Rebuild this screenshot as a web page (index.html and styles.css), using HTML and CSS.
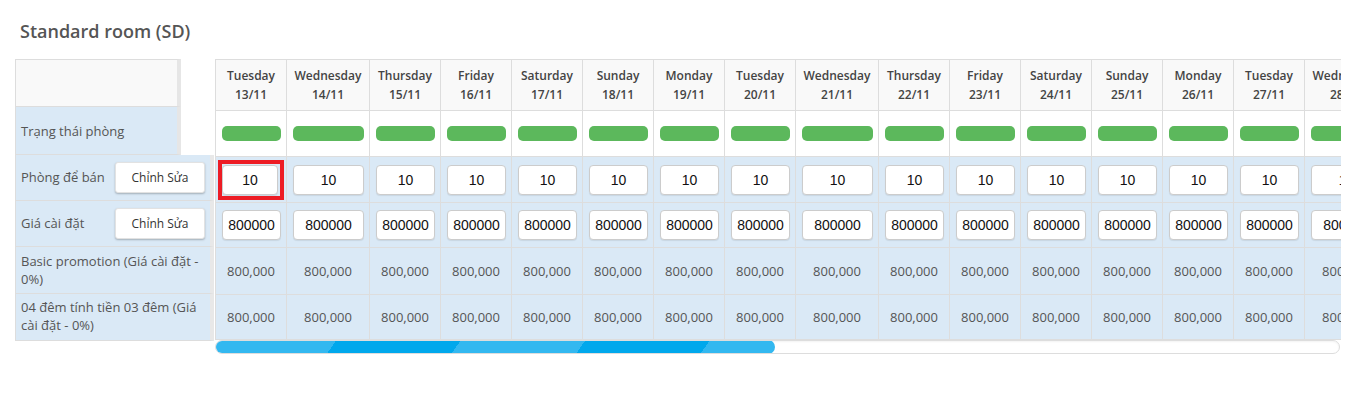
FILE: index.html
```html
<!DOCTYPE html>
<html lang="vi">
<head>
    <meta charset="UTF-8">
    <meta name="viewport" content="width=device-width, initial-scale=1.0">
    <title>Standard room (SD)</title>
    <link rel="stylesheet" href="styles.css">
</head>
<body>
    <div class="page">
        <h2 class="room-title">Standard room (SD)</h2>
        <div class="board">
            <div class="side">
                <div class="side-row narrow head"></div>
                <div class="side-row narrow status">Trạng thái phòng</div>
                <div class="side-row wide row-sell">
                    <span class="side-label">Phòng để bán</span>
                    <button class="btn-edit">Chỉnh Sửa</button>
                </div>
                <div class="side-row wide row-price">
                    <span class="side-label">Giá cài đặt</span>
                    <button class="btn-edit">Chỉnh Sửa</button>
                </div>
                <div class="side-row wide row-promo">Basic promotion (Giá cài đặt - 0%)</div>
                <div class="side-row wide row-promo">04 đêm tính tiền 03 đêm (Giá cài đặt - 0%)</div>
            </div>

            <div class="calendar">
                <div class="calendar-view">
                    <table class="grid">
                        <thead>
                            <tr id="dayRow"></tr>
                        </thead>
                        <tbody>
                            <tr class="status-row" id="statusRow"></tr>
                            <tr class="blue-row input-row" id="sellRow"></tr>
                            <tr class="blue-row input-row price-row" id="priceRow"></tr>
                            <tr class="blue-row value-row" id="promoRow"></tr>
                            <tr class="blue-row value-row last-row" id="nightRow"></tr>
                        </tbody>
                    </table>
                </div>
                <div class="scrollbar">
                    <div class="scroll-thumb"></div>
                </div>
            </div>
        </div>
    </div>

    <script>
        const days = [
            ['Tuesday', '13/11'], ['Wednesday', '14/11'], ['Thursday', '15/11'], ['Friday', '16/11'],
            ['Saturday', '17/11'], ['Sunday', '18/11'], ['Monday', '19/11'], ['Tuesday', '20/11'],
            ['Wednesday', '21/11'], ['Thursday', '22/11'], ['Friday', '23/11'], ['Saturday', '24/11'],
            ['Sunday', '25/11'], ['Monday', '26/11'], ['Tuesday', '27/11'], ['Wednesday', '28/11']
        ];

        let dayHTML = '';
        let statusHTML = '';
        let sellHTML = '';
        let priceHTML = '';
        let promoHTML = '';
        let nightHTML = '';

        days.forEach(([name, date], i) => {
            const cls = name === 'Wednesday' ? ' class="wide-col"' : '';
            dayHTML += `<th${cls}>${name}<br>${date}</th>`;
            statusHTML += `<td><div class="status-bar"></div></td>`;
            if (i === 0) {
                sellHTML += `<td><div class="highlight"><input type="text" class="cell-input" value="10"></div></td>`;
            } else {
                sellHTML += `<td><input type="text" class="cell-input" value="10"></td>`;
            }
            priceHTML += `<td><input type="text" class="cell-input" value="800000"></td>`;
            promoHTML += `<td>800,000</td>`;
            nightHTML += `<td>800,000</td>`;
        });

        document.getElementById('dayRow').innerHTML = dayHTML;
        document.getElementById('statusRow').innerHTML = statusHTML;
        document.getElementById('sellRow').innerHTML = sellHTML;
        document.getElementById('priceRow').innerHTML = priceHTML;
        document.getElementById('promoRow').innerHTML = promoHTML;
        document.getElementById('nightRow').innerHTML = nightHTML;
    </script>
</body>
</html>
```

FILE: styles.css
```css
body {
    margin: 0;
    padding: 0;
    font-family: "Open Sans", sans-serif;
    color: #555;
    background-color: #fff;
}

.page {
    padding-top: 19px;
}

.room-title {
    margin: 0 0 15px 20px;
    font-size: 18px;
    font-weight: 600;
    line-height: 25px;
    color: #555;
}

.board {
    display: flex;
    align-items: flex-start;
}

/* left fixed column */
.side {
    margin-left: 15px;
    width: 200px;
}

.side-row {
    display: flex;
    align-items: center;
    box-sizing: border-box;
    padding: 0 5px;
    border-left: 1px solid #ddd;
    border-bottom: 1px solid #ddd;
    font-size: 13px;
    line-height: 18px;
    color: #555;
    background-color: #dae9f6;
}

.side-row.narrow {
    width: 166px;
    border-right: 4px solid #e6e6e6;
}

.side-row.wide {
    width: 199px;
    border-right: 4px solid #e8e8e8;
}

.side-row.head {
    height: 48px;
    border-top: 1px solid #ddd;
    background-color: #f9f9f9;
}

.side-row.status {
    height: 48px;
}

.row-sell,
.row-price {
    height: 46px;
    justify-content: space-between;
    padding-right: 5px;
}

.side-label {
    padding-bottom: 2px;
}

.row-promo {
    height: 47px;
}

.row-promo:last-child {
    padding-bottom: 2px;
}

.btn-edit {
    width: 90px;
    height: 31px;
    padding: 0;
    border: 1px solid #e2e2e2;
    border-radius: 3px;
    background-color: #fff;
    box-shadow: 0 1px 2px rgba(0, 0, 0, 0.25);
    font-family: "Open Sans", sans-serif;
    font-size: 12px;
    color: #333;
}

/* calendar grid */
.calendar {
    width: 1126px;
}

.calendar-view {
    overflow: hidden;
}

.grid {
    border-collapse: collapse;
    table-layout: fixed;
    width: 1172px;
}

.grid th,
.grid td {
    width: 71px;
    padding: 0;
    border: 1px solid #ddd;
    text-align: center;
    box-sizing: border-box;
}

.grid th.wide-col {
    width: 83px;
}

.grid th {
    height: 51px;
    background-color: #f9f9f9;
    font-size: 12px;
    font-weight: 600;
    line-height: 19px;
    color: #444;
}

.status-row td {
    height: 46px;
    background-color: #fff;
}

.status-bar {
    height: 15px;
    margin: 0 5px 0 6px;
    border-radius: 5px;
    background-color: #5cb85c;
}

.blue-row td {
    background-color: #dae9f6;
}

.input-row td {
    height: 46px;
    padding: 0 5px 0 6px;
}

.price-row td {
    height: 45px;
}

.value-row td {
    height: 47px;
    font-size: 13px;
    color: #555;
}

.last-row td {
    height: 45px;
}

.cell-input {
    display: block;
    width: 100%;
    height: 30px;
    box-sizing: border-box;
    padding: 0 2px;
    border: 1px solid #ccc;
    border-radius: 4px;
    background-color: #fff;
    box-shadow: 0 1px 1px rgba(0, 0, 0, 0.08);
    font-family: "Liberation Sans", Arial, sans-serif;
    font-size: 14px;
    text-align: center;
    color: #111;
}

.highlight {
    margin-left: -4px;
    width: 66px;
    box-sizing: border-box;
    padding: 1px 2px 1px 0;
    border: 4px solid #ed1c24;
}

/* horizontal scrollbar */
.scrollbar {
    height: 14px;
    margin-right: 1px;
    box-sizing: border-box;
    border: 1px solid #ddd;
    border-radius: 7px;
    background-color: #fff;
    box-shadow: inset 0 1px 2px rgba(0, 0, 0, 0.05);
    overflow: hidden;
}

.scroll-thumb {
    width: 560px;
    height: 14px;
    margin: -1px 0 0 -1px;
    border-radius: 7px;
    background: repeating-linear-gradient(125deg, #33b8f0 0 102px, #00a8ec 102px 204px);
    background-position: -3px 0;
}
```
